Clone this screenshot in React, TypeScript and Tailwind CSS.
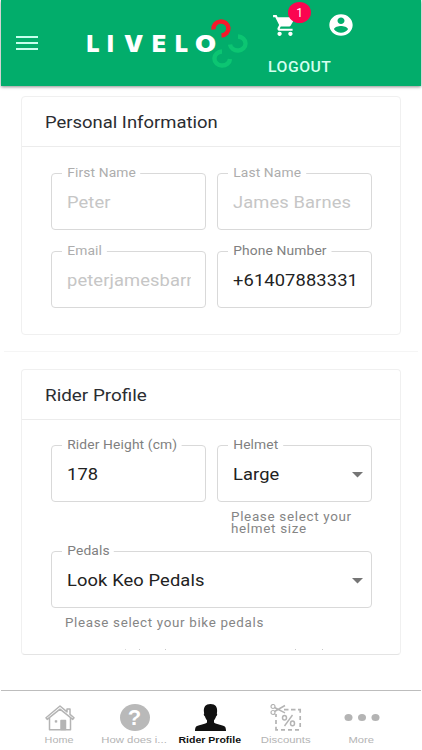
import { useState, type ReactNode } from "react";
import { clsx } from "clsx";

type FieldProps = {
  label: string;
  value: string;
  disabled?: boolean;
  select?: boolean;
};

function Field({ label, value, disabled, select }: FieldProps) {
  return (
    <div className="relative flex h-[57px] items-center rounded-[4px] border border-[#d9d9d9] pl-[15px] pr-[14px] pt-[2px]">
      <span
        className={clsx(
          "absolute left-[10px] top-[-9px] origin-left scale-x-[1.15] whitespace-nowrap bg-white pl-[4.5px] pr-[4px] text-[12px] leading-4 tracking-[0.12px]",
          disabled ? "text-[#adadad]" : "text-[#808080]"
        )}
      >
        {label}
      </span>
      <div className="min-w-0 flex-1 overflow-hidden">
        <div
          className={clsx(
            "origin-left scale-x-[1.11] whitespace-nowrap text-[16.5px] leading-6 tracking-[0.1px]",
            disabled ? "text-[#c6c6c6]" : "text-[#222]"
          )}
        >
          {value}
        </div>
      </div>
      {select && (
        <svg className="absolute right-[8px] top-[26px] h-[6px] w-[11px]" viewBox="0 0 11 6">
          <path d="M0 0h11L5.5 5.5z" fill="#757575" />
        </svg>
      )}
    </div>
  );
}

function Card({ title, titleClass, className, children }: { title: string; titleClass: string; className: string; children: ReactNode }) {
  return (
    <section className={clsx("mx-[21px] rounded-[4px] border border-[#f0f0f0]", className)}>
      <div className="flex h-[50px] items-center border-b border-[#ececec] pl-[23px] pt-px">
        <h2 className={clsx("origin-left whitespace-nowrap text-[17px] leading-6 text-[#2b2d31]", titleClass)}>{title}</h2>
      </div>
      {children}
    </section>
  );
}

function Logo() {
  return (
    <div className="relative ml-[47px] mt-[28px] flex h-8 w-[165px] font-['Inter'] text-[23px] font-black leading-8 text-white">
      <span className="w-[21px] pl-[1.5px]">L</span>
      <span className="w-[18px] pl-px">I</span>
      <span className="w-[27px] origin-left scale-x-[1.06]">V</span>
      <span className="w-[23px] pl-px">E</span>
      <span className="w-[20.5px] pl-px">L</span>
      <span className="origin-left scale-x-[1.18]">O</span>
      <svg className="absolute left-[125px] top-[-10px] h-[50px] w-[40px]" viewBox="0 0 40 50" fill="none" strokeWidth="4.4">
        <path d="M3.500 11.500A7.500 7 0 1 1 11.500 17.500" stroke="#f5192b" />
        <path d="M20 26.500A7.800 7 0 1 0 28 18.500" stroke="#0cc572" />
        <path d="M12 33.500A7.800 7 0 1 0 20 41" stroke="#0cc572" />
      </svg>
    </div>
  );
}

const tabs = [
  {
    name: "Home",
    labelClass: "scale-x-[1.2]",
    icon: (
      <svg className="h-[26px] w-[30px]" viewBox="0 0 30 26" fill="none" stroke="currentColor" strokeWidth="1.5" strokeLinejoin="round">
        <path d="M4.500 13v11.800h21V13M15 1 1 12.800l1.200 1.600L15 4.200l12.800 10.200 1.200-1.600-4-3.400V4h-3v2.900z" />
        <path d="M16 15.500h4.500v9H16z" fill="currentColor" />
        <path d="M10 15.500h2v1.800h-2z" fill="currentColor" strokeWidth=".5" />
      </svg>
    ),
  },
  {
    name: "How does i...",
    labelClass: "scale-x-[1.26]",
    icon: (
      <div className="flex h-[27px] w-[30px] items-center justify-center rounded-[50%] bg-[#b9b9b9] font-['Liberation_Sans'] text-[22px] font-bold text-white">
        ?
      </div>
    ),
  },
  {
    name: "Rider Profile",
    labelClass: "scale-x-[1.17]",
    icon: (
      <svg className="h-[27px] w-[31px]" viewBox="0 0 31 27" fill="currentColor">
        <path d="M15.500 0c5 0 7 3 6.600 7.500-.1 1-.2 1.700-.3 2 .8.3.4 2.300-.8 3.100-.5 1.700-1 2.700-2 3.600v2.300c2 2 10 2.300 11.200 4.500.5 1 .8 2.500.8 4H0c0-1.500.3-3 .8-4C2 20.800 10 20.500 12 18.500v-2.300c-1-.9-1.500-1.900-2-3.600-1.200-.8-1.600-2.800-.8-3.100-.1-.3-.2-1-.3-2C8.500 3 10.500 0 15.500 0z" />
      </svg>
    ),
  },
  {
    name: "Discounts",
    labelClass: "scale-x-[1.26]",
    icon: (
      <svg className="h-[27px] w-[32px]" viewBox="0 0 32 27" fill="none" stroke="currentColor" strokeWidth="1.2">
        <circle cx="3" cy="2.500" r="2" />
        <circle cx="3" cy="8.500" r="2" />
        <path d="M4.500 3.500 15 8.800M4.500 7.500 15 1.500" strokeWidth="1.500" />
        <path d="M14 5.700h4.500M21 5.700h4.500M28 5.700h2.200v3M30.200 12v4M30.200 19v4M29 25.800h-4M22 25.800h-4M15 25.800h-4M8 25.800H6v-3M6 20v-4M6 13v-3" strokeWidth="1.700" />
        <path d="m22.500 11-8 11" strokeWidth="1.400" />
        <ellipse cx="14.500" cy="13.700" rx="2" ry="2.300" strokeWidth="1.500" />
        <ellipse cx="22.500" cy="19.400" rx="2" ry="2.300" strokeWidth="1.500" />
      </svg>
    ),
  },
  {
    name: "More",
    labelClass: "scale-x-[1.24]",
    icon: (
      <svg className="h-[27px] w-[36px]" viewBox="0 0 36 27" fill="currentColor">
        <ellipse cx="4.500" cy="13.500" rx="4" ry="3.500" />
        <ellipse cx="18" cy="13.500" rx="4" ry="3.500" />
        <ellipse cx="31.500" cy="13.500" rx="4" ry="3.500" />
      </svg>
    ),
  },
];

export default function App() {
  const [active, setActive] = useState("Rider Profile");

  return (
    <div className="flex h-[750px] w-[422px] flex-col overflow-hidden bg-white font-['Roboto',sans-serif]">
      {/* App bar */}
      <header className="mx-px flex h-[86px] shrink-0 bg-[#02ad6b] shadow-[0_1px_3px_rgba(0,0,0,0.45)]">
        <button className="ml-[15px] mt-[36px] flex h-[14px] w-[22px] flex-col justify-between" aria-label="Menu">
          <span className="h-[2px] w-full bg-[#c5ffed]" />
          <span className="h-[2px] w-full bg-[#c5ffed]" />
          <span className="h-[2px] w-full bg-[#c5ffed]" />
        </button>
        <Logo />
        <div className="flex flex-col pl-[18px]">
          <div className="flex h-[50px] pl-[4px] pt-[13px] text-white">
            <div className="relative">
              <svg className="h-[25px] w-[26px]" viewBox="0 0 24 24" preserveAspectRatio="none" fill="currentColor">
                <path d="M7 18c-1.100 0-1.990.9-1.990 2S5.900 22 7 22s2-.9 2-2-.9-2-2-2zM1 2v2h2l3.600 7.590-1.350 2.450c-.16.280-.25.610-.25.960 0 1.100.9 2 2 2h12v-2H7.420c-.14 0-.25-.11-.25-.25l.03-.12.9-1.630h7.450c.75 0 1.410-.41 1.750-1.030l3.580-6.490A1.003 1.003 0 0 0 20 4H5.210l-.94-2H1zm16 16c-1.100 0-1.990.9-1.990 2s.89 2 1.990 2 2-.9 2-2-.9-2-2-2z" />
              </svg>
              <span className="absolute left-[16px] top-[-11px] flex h-[21px] w-[23px] items-center justify-center rounded-[50%] bg-[#fb0550] text-[12px]">
                1
              </span>
            </div>
            <svg className="ml-[29px] mt-[-1px] h-[26px] w-[28px]" viewBox="0 0 24 24" preserveAspectRatio="none" fill="currentColor">
              <path d="M12 2C6.480 2 2 6.480 2 12s4.480 10 10 10 10-4.480 10-10S17.520 2 12 2zm0 3c1.660 0 3 1.340 3 3s-1.340 3-3 3-3-1.340-3-3 1.340-3 3-3zm0 14.200a7.200 7.200 0 0 1-6-3.220c.03-1.990 4-3.080 6-3.080 1.990 0 5.970 1.090 6 3.080a7.200 7.200 0 0 1-6 3.220z" />
            </svg>
          </div>
          <button className="mt-[7px] w-fit origin-left scale-x-[1.05] text-[15px] font-medium leading-5 tracking-[0.5px] text-[#d4ffef]">LOGOUT</button>
        </div>
      </header>

      <main className="h-[604px] shrink-0 pt-[10px]">
        <Card title="Personal Information" titleClass="scale-x-[1.085]" className="h-[239px]">
          <div className="grid grid-cols-[155px_155px] gap-x-[11px] gap-y-[21px] pl-[29px] pt-[26px]">
            <Field label="First Name" value="Peter" disabled />
            <Field label="Last Name" value="James Barnes" disabled />
            <Field label="Email" value="peterjamesbarnes" disabled />
            <Field label="Phone Number" value="+61407883331" />
          </div>
        </Card>

        <hr className="mx-1 mt-[16px] border-[#f5f5f5]" />

        <Card title="Rider Profile" titleClass="scale-x-[1.11]" className="mt-[17px] h-[286px] border-b-[#e4e4e4]">
          <div className="grid grid-cols-[155px_155px] gap-x-[11px] pl-[29px] pt-[25px]">
            <Field label="Rider Height (cm)" value="178" />
            <div>
              <Field label="Helmet" value="Large" select />
              <p className="ml-[13.5px] mt-[9px] w-[115px] origin-left scale-x-[1.12] text-[12px] leading-[12px] tracking-[0.6px] text-[#858585]">
                Please select your
                <br />
                helmet size
              </p>
            </div>
            <div className="col-span-2 mt-[16px]">
              <Field label="Pedals" value="Look Keo Pedals" select />
              <p className="ml-[14px] mt-[9px] w-fit origin-left scale-x-[1.115] whitespace-nowrap text-[12px] leading-[13px] tracking-[0.6px] text-[#858585]">
                Please select your bike pedals
              </p>
            </div>
          </div>
          {/* tips of the next row, cut off by the card */}
          <div className="mt-[19px] flex h-px gap-[13px] pl-[103px]">
            <span className="w-px bg-[#d8d8d8]" />
            <span className="w-px bg-[#c8c8c8]" />
            <span className="ml-[12px] w-px bg-[#c8c8c8]" />
            <span className="ml-[116px] w-px bg-[#c8c8c8]" />
            <span className="ml-[13px] w-px bg-[#c8c8c8]" />
          </div>
        </Card>
      </main>

      {/* Bottom tabs */}
      <nav className="mx-px grid h-[60px] shrink-0 grid-cols-[75px_75px_76px_76px_75px] border-t border-[#bdbdbd] pl-[21px] pt-[13px] font-['Liberation_Sans']">
        {tabs.map((tab) => (
          <button
            key={tab.name}
            onClick={() => setActive(tab.name)}
            className={clsx("flex flex-col items-center", tab.name === active ? "font-bold text-[#111]" : "text-[#b4b4b4]")}
          >
            <span className="flex h-[27px] items-center">{tab.icon}</span>
            <span className={clsx("mt-[3px] whitespace-nowrap text-[9px] leading-[12px]", tab.labelClass)}>{tab.name}</span>
          </button>
        ))}
      </nav>
    </div>
  );
}
